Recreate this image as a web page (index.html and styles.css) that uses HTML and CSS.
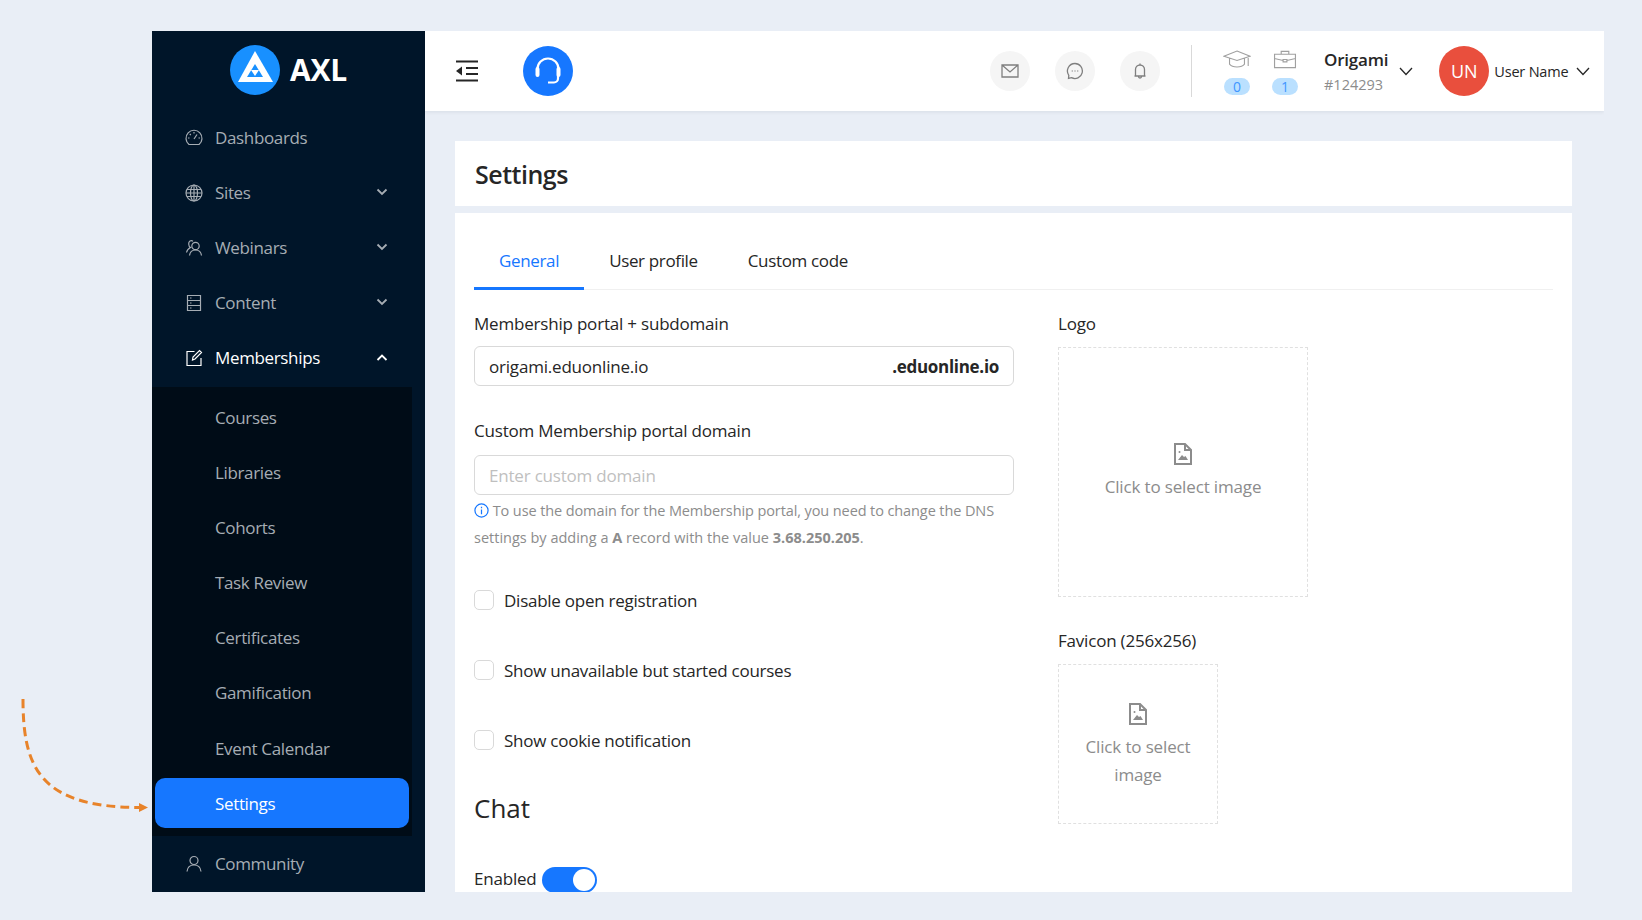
FILE: index.html
```html
<!DOCTYPE html>
<html lang="en">
<head>
    <meta charset="UTF-8">
    <meta name="viewport" content="width=device-width, initial-scale=1.0">
    <title>Settings</title>
    <link rel="stylesheet" href="styles.css">
</head>
<body>
    <!-- annotation arrow, drawn over the page background -->
    <svg class="arrow" width="150" height="125" viewBox="0 0 150 125">
        <path d="M22 2 C22 70 38 110 138 110.500" fill="none" stroke="#e8832a" stroke-width="3" stroke-dasharray="9 5"/>
        <path d="M138 106 L147 110.500 L138 115 Z" fill="#e8832a"/>
    </svg>

    <div class="app">
        <aside class="sidebar">
            <div class="logo">
                <svg width="50" height="50" viewBox="0 0 50 50">
                    <circle cx="25" cy="25" r="25" fill="#1890ff"/>
                    <path d="M25 6 L43 37 H8 Z" fill="#fff"/>
                    <path d="M25 19 L33 32 H17 Z" fill="#1890ff"/>
                    <path d="M21 25 H29 L25 31 Z" fill="#fff"/>
                </svg>
                <span>AXL</span>
            </div>
            <nav class="menu">
                <a class="item">
                    <svg class="icon" viewBox="0 0 18 18"><path d="M4 15.500 H14 A8 8 0 1 0 4 15.500 Z M9 10 L12 5.500 M9 3 V4.500 M3 9 H4.500 M13.500 9 H15 M4.800 5 L5.800 6" /></svg>
                    Dashboards
                </a>
                <a class="item">
                    <svg class="icon" viewBox="0 0 18 18"><circle cx="9" cy="9" r="8"/><ellipse cx="9" cy="9" rx="3.500" ry="8"/><path d="M1 9 H17 M2 5.500 H16 M2 12.500 H16 M9 1 V17"/></svg>
                    Sites
                    <svg class="caret" viewBox="0 0 12 8"><path d="M1.500 1.500 L6 6 L10.500 1.500"/></svg>
                </a>
                <a class="item">
                    <svg class="icon" viewBox="0 0 18 18"><circle cx="10.500" cy="7" r="3.700"/><path d="M4.500 16.500 C5 12.500 7.500 11 10.500 11 C13.500 11 16 12.500 16.500 16.500 M8 2.200 C6 0.800 3.500 2 3.700 5 C3.800 7 4.500 8 5.500 8.500 C3.500 9.500 2 11 1.500 13.500"/></svg>
                    Webinars
                    <svg class="caret" viewBox="0 0 12 8"><path d="M1.500 1.500 L6 6 L10.500 1.500"/></svg>
                </a>
                <a class="item">
                    <svg class="icon" viewBox="0 0 18 18"><path d="M2.500 1.500 H15.500 V16.500 H2.500 Z M2.500 6.500 H15.500 M2.500 11.500 H15.500 M5 4 H6.500 M5 9 H6.500 M5 14 H6.500"/></svg>
                    Content
                    <svg class="caret" viewBox="0 0 12 8"><path d="M1.500 1.500 L6 6 L10.500 1.500"/></svg>
                </a>
                <a class="item item-open">
                    <svg class="icon" viewBox="0 0 18 18"><path d="M16 9 V16.500 H2 V2.500 H9.500 M7.500 11 L8 8 L14.500 1.500 L16.500 3.500 L10 10 Z"/></svg>
                    Memberships
                    <svg class="caret" viewBox="0 0 12 8"><path d="M1.500 6 L6 1.500 L10.500 6"/></svg>
                </a>
                <div class="submenu">
                    <a class="subitem">Courses</a>
                    <a class="subitem">Libraries</a>
                    <a class="subitem">Cohorts</a>
                    <a class="subitem">Task Review</a>
                    <a class="subitem">Certificates</a>
                    <a class="subitem">Gamification</a>
                    <a class="subitem">Event Calendar</a>
                    <a class="subitem active">Settings</a>
                </div>
                <a class="item">
                    <svg class="icon" viewBox="0 0 18 18"><circle cx="9" cy="5.500" r="4"/><path d="M2 16.500 C2.500 12 5 10 9 10 C13 10 15.500 12 16 16.500"/></svg>
                    Community
                </a>
            </nav>
        </aside>

        <div class="main">
            <header class="topbar">
                <svg class="fold" width="24" height="22" viewBox="0 0 24 22"><path d="M1 1.500 H23 M11 8 H23 M11 14 H23 M1 20.500 H23" stroke="#262626" stroke-width="2" fill="none"/><path d="M7 6.500 V15.500 L1 11 Z" fill="#262626"/></svg>
                <div class="support">
                    <svg width="28" height="28" viewBox="0 0 28 28" fill="none" stroke="#fff" stroke-width="2.200"><path d="M3.500 15 V12 A10.500 10.500 0 0 1 24.500 12 V15"/><path d="M3.500 12 V18 M24.500 12 V18" stroke-width="4" stroke-linecap="round"/><path d="M24 18 V21.500 A4 4 0 0 1 20 25.500 H14"/></svg>
                </div>
                <div class="round-icons">
                    <span class="round">
                        <svg class="glyph" viewBox="0 0 18 18"><path d="M1 3 H17 V15 H1 Z M1 3 L9 10 L17 3"/></svg>
                    </span>
                    <span class="round">
                        <svg class="glyph" viewBox="0 0 18 18"><path d="M9 1.500 A7.500 7.500 0 1 1 5.500 15.700 L2.500 16.500 L2.800 13.300 A7.500 7.500 0 0 1 9 1.500 Z"/><path d="M5.800 9 H6.600 M8.600 9 H9.400 M11.400 9 H12.200"/></svg>
                    </span>
                    <span class="round">
                        <svg class="glyph" viewBox="0 0 18 18"><path d="M3.500 14 H14.500 M4.500 14 V7.500 A4.500 4.500 0 0 1 13.500 7.500 V14 M9 3 V1.500 M7.500 14.500 A1.500 1.500 0 0 0 10.500 14.500"/></svg>
                    </span>
                </div>
                <span class="vline"></span>
                <div class="stat">
                    <svg class="stat-icon" viewBox="0 0 30 20"><path d="M15 1 L29 6.500 L15 11 L1 6.500 Z M7 9 V15 C10 19 20 19 23 15 V9 M27 7 V17"/></svg>
                    <span class="badge">0</span>
                </div>
                <div class="stat">
                    <svg class="stat-icon" viewBox="0 0 26 20"><path d="M2 4.500 H24 V18.500 H2 Z M9 4.500 V1.500 H17 V4.500 M2 9 L11 11 M24 9 L15 11 M11 10 H15 V12.500 H11 Z"/></svg>
                    <span class="badge">1</span>
                </div>
                <div class="account">
                    <strong>Origami</strong>
                    <span>#124293</span>
                </div>
                <svg class="chev" viewBox="0 0 14 9"><path d="M1 1 L7 7.500 L13 1"/></svg>
                <span class="avatar">UN</span>
                <span class="username">User Name</span>
                <svg class="chev chev-last" viewBox="0 0 14 9"><path d="M1 1 L7 7.500 L13 1"/></svg>
            </header>

            <div class="page">
                <div class="title-card">
                    <h1>Settings</h1>
                </div>
                <section class="card">
                    <div class="tabs">
                        <a class="tab current">General</a>
                        <a class="tab">User profile</a>
                        <a class="tab">Custom code</a>
                    </div>
                    <div class="columns">
                        <div class="col-left">
                            <label class="label">Membership portal + subdomain</label>
                            <div class="input">
                                <span>origami.eduonline.io</span>
                                <b>.eduonline.io</b>
                            </div>
                            <label class="label label-second">Custom Membership portal domain</label>
                            <div class="input input-empty">Enter custom domain</div>
                            <div class="hint">
                                <p>
                                    <svg class="info" viewBox="0 0 16 16"><circle cx="8" cy="8" r="7"/><path d="M8 7 V12 M8 4 V5.500"/></svg>
                                    To use the domain for the Membership portal, you need to change the DNS
                                </p>
                                <p class="hint-second">settings by adding a <b>A</b> record with the value <b>3.68.250.205</b>.</p>
                            </div>
                            <div class="check check-first"><span class="box"></span>Disable open registration</div>
                            <div class="check"><span class="box"></span>Show unavailable but started courses</div>
                            <div class="check"><span class="box"></span>Show cookie notification</div>
                            <h2>Chat</h2>
                            <div class="toggle-row">Enabled <span class="toggle"><i></i></span></div>
                        </div>
                        <div class="col-right">
                            <label class="label">Logo</label>
                            <div class="upload upload-logo">
                                <svg class="file" viewBox="0 0 18 22"><path d="M1 1 H11 L17 7 V21 H1 Z M11 1 V7 H17" fill="none" stroke="#8c8c8c" stroke-width="2"/><path d="M4 17 L8 12 L10 14 L11.500 13 L14 17 Z" fill="#8c8c8c"/><circle cx="5.500" cy="9" r="1" fill="#8c8c8c"/></svg>
                                <span>Click to select image</span>
                            </div>
                            <label class="label label-fav">Favicon (256x256)</label>
                            <div class="upload upload-fav">
                                <svg class="file" viewBox="0 0 18 22"><path d="M1 1 H11 L17 7 V21 H1 Z M11 1 V7 H17" fill="none" stroke="#8c8c8c" stroke-width="2"/><path d="M4 17 L8 12 L10 14 L11.500 13 L14 17 Z" fill="#8c8c8c"/><circle cx="5.500" cy="9" r="1" fill="#8c8c8c"/></svg>
                                <span>Click to select image</span>
                            </div>
                        </div>
                    </div>
                </section>
            </div>
        </div>
    </div>
</body>
</html>
```

FILE: styles.css
```css
*{
    margin: 0;
    padding: 0;
    box-sizing: border-box;
}
html, body{
    height: 100%;
    overflow: hidden;
}
body{
    background-color: #e9eef6;
    font-family: "Open Sans", "Noto Sans", sans-serif;
    color: #262626;
    padding: 31px 38px 0 152px;
}
.arrow{
    position: absolute;
    left: 1px;
    top: 697px;
}
.app{
    display: flex;
    height: 861px;
    overflow: hidden;
}

/* sidebar */
.sidebar{
    width: 273px;
    flex-shrink: 0;
    background-color: #001529;
    color: #a6adb4;
}
.logo{
    display: flex;
    align-items: center;
    justify-content: center;
    gap: 10px;
    height: 79px;
    padding-bottom: 1px;
}
.logo span{
    font-size: 30px;
    font-weight: 700;
    color: #fff;
    letter-spacing: -0.3px;
    margin-top: -2px;
}
.item{
    display: flex;
    align-items: center;
    height: 55px;
    padding: 0 37px 0 33px;
    font-size: 17px;
    letter-spacing: -0.35px;
}
.item .icon{
    width: 18px;
    height: 18px;
    margin-right: 12px;
    fill: none;
    stroke: currentColor;
    stroke-width: 1.200;
}
.item .caret{
    width: 12px;
    height: 8px;
    margin: -2px 0 0 auto;
    fill: none;
    stroke: currentColor;
    stroke-width: 1.800;
}
.item-open{
    margin-bottom: 2px;
    color: #fff;
}
.item-open .caret{
    margin-top: 0;
}
.submenu{
    width: 260px;
    background-color: #000c17;
    padding: 5px 3px 8px;
}
.subitem{
    display: flex;
    align-items: center;
    height: 50px;
    margin-bottom: 5.200px;
    padding-left: 60px;
    border-radius: 10px;
    font-size: 17px;
    letter-spacing: -0.35px;
}
.subitem:last-child{
    margin-bottom: 0;
}
.subitem.active{
    background-color: #1677ff;
    color: #fff;
}

/* top bar */
.main{
    flex: 1;
    min-width: 0;
}
.topbar{
    display: flex;
    align-items: center;
    height: 80px;
    background-color: #fff;
    padding-left: 30px;
    box-shadow: 0 1px 4px rgba(0, 21, 41, 0.08);
}
.support{
    display: flex;
    align-items: center;
    justify-content: center;
    width: 50px;
    height: 50px;
    margin-left: 44px;
    border-radius: 50%;
    background-color: #1677ff;
}
.round-icons{
    display: flex;
    gap: 25px;
    margin-left: 417px;
}
.round{
    display: flex;
    align-items: center;
    justify-content: center;
    width: 40px;
    height: 40px;
    border-radius: 50%;
    background-color: #f5f5f5;
}
.glyph{
    width: 18px;
    height: 18px;
    fill: none;
    stroke: #7f7f7f;
    stroke-width: 1.300;
}
.vline{
    width: 1px;
    height: 52px;
    margin: 0 32px 0 31px;
    background-color: #d9d9d9;
}
.stat{
    display: flex;
    flex-direction: column;
    align-items: center;
    width: 26px;
    margin-right: 22px;
    padding-top: 2px;
}
.stat-icon{
    width: 28px;
    height: 19px;
    margin-bottom: 9px;
    fill: none;
    stroke: #a0a0a0;
    stroke-width: 1.200;
}
.badge{
    width: 26px;
    height: 17px;
    line-height: 17px;
    text-align: center;
    border-radius: 9px;
    background-color: #bae0ff;
    color: #4096ff;
    font-size: 14px;
}
.account{
    display: flex;
    flex-direction: column;
    margin-left: 4px;
    padding-top: 2px;
    line-height: 25px;
}
.account strong{
    font-size: 17px;
    font-weight: 600;
    letter-spacing: -0.2px;
}
.account span{
    font-size: 14.500px;
    color: #8c8c8c;
}
.chev{
    width: 14px;
    height: 9px;
    margin-left: 11px;
    fill: none;
    stroke: #262626;
    stroke-width: 1.300;
}
.avatar{
    display: flex;
    align-items: center;
    justify-content: center;
    width: 50px;
    height: 50px;
    margin-left: 26px;
    border-radius: 50%;
    background-color: #e94f3d;
    color: #fff;
    font-size: 18px;
}
.username{
    margin-left: 5px;
    font-size: 14.500px;
    letter-spacing: -0.2px;
}
.chev-last{
    margin-left: 8px;
}

/* page */
.page{
    margin: 30px 32px 0 30px;
}
.title-card{
    display: flex;
    align-items: center;
    height: 65px;
    padding-left: 20px;
    background-color: #fff;
}
.title-card h1{
    font-size: 25px;
    font-weight: 600;
    letter-spacing: -0.5px;
}
.card{
    height: 700px;
    margin-top: 7px;
    padding: 24px 19px;
    background-color: #fff;
}
.tabs{
    display: flex;
    height: 53px;
    border-bottom: 1px solid #f0f0f0;
    font-size: 17px;
    letter-spacing: -0.35px;
}
.tab{
    height: 53px;
    padding: 12px 25px 0;
    white-space: nowrap;
}
.tab.current{
    border-bottom: 3px solid #1677ff;
    color: #1677ff;
}
.columns{
    display: flex;
    margin-top: 20px;
}
.col-left{
    width: 540px;
    margin-right: 44px;
}
.label{
    display: block;
    height: 28px;
    line-height: 28px;
    font-size: 17px;
    letter-spacing: -0.2px;
}
.input{
    display: flex;
    align-items: center;
    justify-content: space-between;
    height: 40px;
    margin-top: 8px;
    padding: 0 14px;
    border: 1px solid #d9d9d9;
    border-radius: 6px;
    font-size: 17px;
    letter-spacing: -0.2px;
}
.input b{
    font-weight: 700;
    letter-spacing: -0.3px;
}
.input-empty{
    margin-top: 10px;
    color: #bfbfbf;
}
.label-second{
    margin-top: 31px;
}
.hint{
    margin-top: 2px;
    font-size: 14.500px;
    line-height: 27px;
    letter-spacing: -0.1px;
    color: #8c8c8c;
}
.hint-second{
    letter-spacing: 0;
}
.info{
    width: 15px;
    height: 15px;
    vertical-align: -2px;
    fill: none;
    stroke: #1677ff;
    stroke-width: 1.300;
}
.check{
    display: flex;
    align-items: center;
    gap: 10px;
    height: 30px;
    margin-top: 40px;
    font-size: 17px;
    letter-spacing: -0.25px;
}
.check-first{
    margin-top: 34px;
}
.box{
    width: 20px;
    height: 20px;
    border: 1px solid #d9d9d9;
    border-radius: 5px;
}
h2{
    margin-top: 33px;
    font-size: 26px;
    font-weight: 400;
    line-height: 40px;
}
.toggle-row{
    display: flex;
    align-items: center;
    gap: 5px;
    margin-top: 35px;
    font-size: 17px;
    letter-spacing: -0.2px;
}
.toggle{
    position: relative;
    width: 55px;
    height: 26px;
    margin-top: 4px;
    border-radius: 13px;
    background-color: #1677ff;
}
.toggle i{
    position: absolute;
    right: 2px;
    top: 2px;
    width: 22px;
    height: 22px;
    border-radius: 50%;
    background-color: #fff;
}
.upload{
    display: flex;
    flex-direction: column;
    align-items: center;
    justify-content: center;
    margin-top: 9px;
    border: 1px dashed #e0e0e0;
    color: #8c8c8c;
    font-size: 17px;
    line-height: 28px;
    letter-spacing: -0.15px;
    text-align: center;
}
.file{
    width: 18px;
    height: 22px;
    margin-bottom: 8px;
}
.upload-logo{
    width: 250px;
    height: 250px;
}
.upload-fav{
    width: 160px;
    height: 160px;
    padding: 4px 20px 0;
}
.label-fav{
    margin-top: 30px;
}
```
